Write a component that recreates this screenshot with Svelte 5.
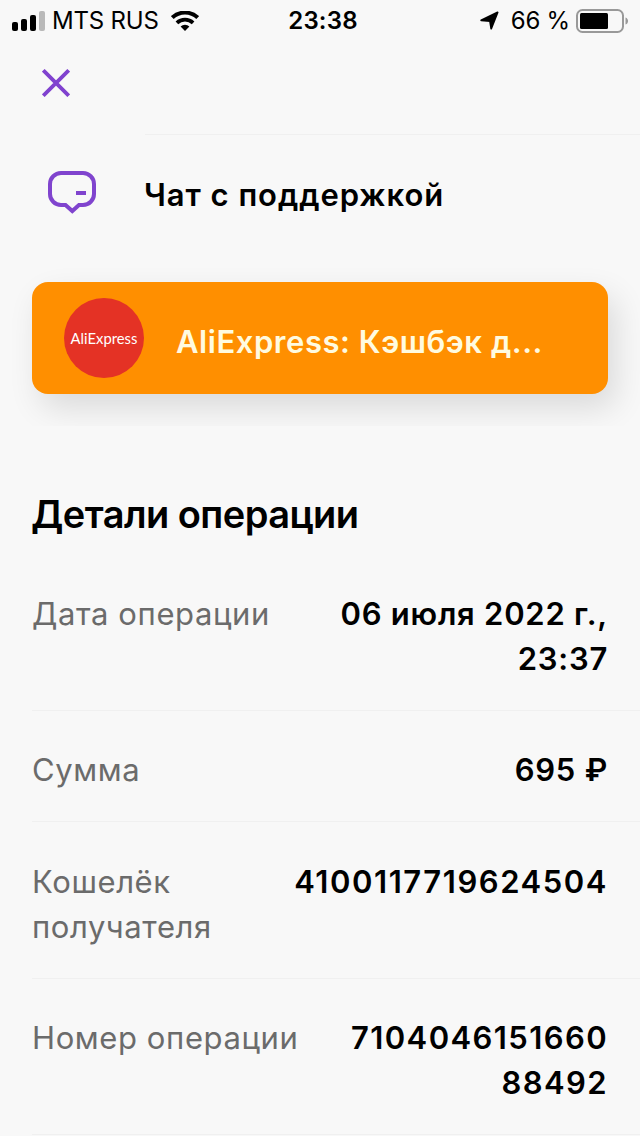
<script>
  const details = [
    { id: 'date', label: 'Дата операции', lines: ['06 июля 2022 г.,', '23:37'] },
    { id: 'sum', label: 'Сумма', lines: ['695 ₽'] },
    { id: 'wallet', label: 'Кошелёк получателя', lines: ['4100117719624504'] },
    { id: 'number', label: 'Номер операции', lines: ['7104046151660', '88492'] }
  ];
</script>

<div class="screen">
  <header class="status">
    <div class="status__left">
      <svg class="signal" width="34" height="20" viewBox="0 0 34 20">
        <rect x="0" y="11" width="6" height="9" rx="2" />
        <rect x="9" y="8" width="6" height="12" rx="2" />
        <rect x="18" y="4" width="6" height="16" rx="2" />
        <rect x="27" y="0" width="6" height="20" rx="2" fill="#b9b9b9" />
      </svg>
      <span class="carrier">MTS RUS</span>
      <svg class="wifi" width="28" height="20" viewBox="0 0 28 20">
        <path d="M1.3 6.6a18.5 18.5 0 0 1 25.4 0" fill="none" stroke="#000" stroke-width="4" />
        <path d="M5.9 11.8a11.8 11.8 0 0 1 16.2 0" fill="none" stroke="#000" stroke-width="3.8" />
        <path d="M9.6 15.6a6.3 6.3 0 0 1 8.8 0L14 20z" />
      </svg>
    </div>
    <span class="time">23:38</span>
    <div class="status__right">
      <svg class="location" width="19" height="19" viewBox="0 0 19 19">
        <path d="M17.6 1.4 11.2 17.6 10 10 1.2 9.4z" stroke="#000" stroke-width="1.8" stroke-linejoin="round" />
      </svg>
      <span class="percent">66 %</span>
      <svg class="battery" width="53" height="24" viewBox="0 0 53 24">
        <rect x="1" y="1" width="46" height="22" rx="5.5" fill="none" stroke="#999" stroke-width="2" />
        <rect x="4" y="4" width="28" height="16" rx="1.5" />
        <path d="M49.5 8.5c3.4 1 3.4 6 0 7z" fill="#999" />
      </svg>
    </div>
  </header>

  <nav class="nav">
    <button class="close" aria-label="Закрыть">
      <svg width="28" height="28" viewBox="0 0 28 28">
        <path d="M1.3 1.3l25.4 25.4M26.7 1.3L1.3 26.7" stroke="#8042cf" stroke-width="3.8" />
      </svg>
    </button>
  </nav>

  <div class="support">
    <svg width="48" height="43" viewBox="0 0 48 43" fill="none" stroke="#8044ce" stroke-width="4">
      <path d="M13 2h22a11 11 0 0 1 11 11v10a11 11 0 0 1-11 11h-4l-6.7 6L17.5 34H13A11 11 0 0 1 2 23V13A11 11 0 0 1 13 2z" />
      <path d="M28 22h10" />
    </svg>
    <span class="support__text">Чат с поддержкой</span>
  </div>

  <div class="offer">
    <div class="card">
      <div class="logo"><span>AliExpress</span></div>
      <span class="card__title">AliExpress: Кэшбэк д...</span>
    </div>
  </div>

  <h2>Детали операции</h2>

  <dl class="details">
    {#each details as item}
      <div class="row {item.id}">
        <dt>{item.label}</dt>
        <dd>
          {#each item.lines as line}
            <span>{line}</span>
          {/each}
        </dd>
      </div>
    {/each}
  </dl>
</div>

<style>
  :global(body) {
    background: #f8f8f8;
  }

  .screen {
    width: 640px;
    height: 1136px;
    overflow: hidden;
    background: #f8f8f8;
    color: #000;
    font-family: Inter, 'Liberation Sans', sans-serif;
  }

  .screen span,
  h2,
  dt {
    white-space: nowrap;
  }

  .status {
    display: grid;
    grid-template-columns: 1fr auto 1fr;
    align-items: center;
    height: 41px;
    padding: 0 11px 0 12px;
    box-sizing: border-box;
    font-size: 24px;
  }

  .status__left,
  .status__right {
    display: flex;
    align-items: center;
  }

  .status__right {
    justify-content: flex-end;
  }

  .carrier {
    margin-left: 6px;
    letter-spacing: -0.2px;
  }

  .wifi {
    margin-left: 12px;
  }

  .time {
    padding-left: 5px;
    font-weight: 600;
    letter-spacing: 0.2px;
  }

  .percent {
    margin: 0 6px 0 12px;
    letter-spacing: -0.2px;
  }

  .nav {
    display: flex;
    height: 94px;
    padding: 28px 0 0 42px;
    box-sizing: border-box;
  }

  .nav::after {
    content: '';
    align-self: flex-end;
    flex: 1;
    height: 1px;
    margin-left: 75px;
    background: #f0f0f0;
  }

  .close {
    width: 28px;
    height: 28px;
    padding: 0;
    border: 0;
    background: none;
  }

  .support {
    display: flex;
    align-items: center;
    gap: 48px;
    height: 115px;
    padding-left: 48px;
  }

  .support__text {
    font-size: 31px;
    font-weight: 600;
    letter-spacing: 0.95px;
    padding-top: 3px;
  }

  .offer {
    height: 176px;
    padding: 32px;
    box-sizing: border-box;
    overflow: hidden;
  }

  .card {
    display: flex;
    align-items: center;
    height: 112px;
    padding-left: 32px;
    box-sizing: border-box;
    border-radius: 16px;
    background: #ff8f00;
    box-shadow: 8px 14px 32px rgba(0, 0, 0, 0.12);
  }

  .logo {
    display: flex;
    flex: none;
    align-items: center;
    justify-content: center;
    width: 80px;
    height: 80px;
    border-radius: 50%;
    background: #e43225;
    color: #fff;
    font-family: Lato, sans-serif;
    font-size: 14.8px;
  }

  .card__title {
    margin-left: 32px;
    padding-top: 7px;
    color: #fffbe0;
    font-size: 31px;
    font-weight: 600;
    letter-spacing: 0.55px;
  }

  h2 {
    margin: 63px 0 0 31px;
    font-size: 38px;
    line-height: 50px;
    font-weight: 600;
    letter-spacing: -0.55px;
  }

  .details {
    margin: 15px 0 0 32px;
    font-size: 31px;
    line-height: 45px;
  }

  .row {
    display: flex;
    justify-content: space-between;
    padding: 36.5px 32px 29px 0;
    border-bottom: 1px solid #f0f0f0;
  }

  dt {
    color: #6b6b6b;
    letter-spacing: 0.6px;
  }

  .wallet dt {
    width: 180px;
    white-space: normal;
  }

  dd {
    display: flex;
    flex-direction: column;
    align-items: flex-end;
    margin: 0;
    font-weight: 600;
    letter-spacing: 0.75px;
  }

  .wallet dd {
    letter-spacing: 1.55px;
  }

  .number dd {
    letter-spacing: 1.4px;
  }
</style>
